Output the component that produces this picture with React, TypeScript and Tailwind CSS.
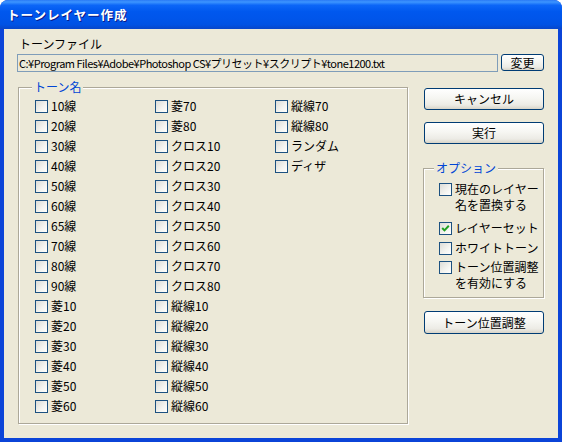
import React from "react";

const FONT = "font-['Noto_Sans_CJK_JP','Noto_Sans',sans-serif]";

function Box({ checked }: { checked?: boolean }) {
  return (
    <span className="w-[13px] h-[13px] shrink-0 border border-[#1C5180] bg-[linear-gradient(135deg,#dcdcd7_0%,#f4f4f0_60%,#ffffff_100%)] flex items-center justify-center">
      {checked && (
        <svg width="9" height="9" viewBox="0 0 9 9">
          <path d="M1.2 4 L3.5 6.4 L7.8 1.8" fill="none" stroke="#21A121" strokeWidth="2" />
        </svg>
      )}
    </span>
  );
}

function Check({ label }: { label: string }) {
  return (
    <div className="h-[20px] flex items-start">
      <span className="mt-[2px]">
        <Box />
      </span>
      <span className="ml-[3px] text-[12px] leading-[16px] text-black whitespace-nowrap">{label}</span>
    </div>
  );
}

function Btn({ label, className }: { label: string; className?: string }) {
  return (
    <div
      className={
        "rounded-[3px] border border-[#003C74] bg-[linear-gradient(to_bottom,#ffffff_0%,#f6f6f2_45%,#ecebe5_80%,#d8d4c8_100%)] flex items-center justify-center text-[12px] leading-[14px] text-black " +
        (className ?? "")
      }
    >
      {label}
    </div>
  );
}

const col1 = ["10線", "20線", "30線", "40線", "50線", "60線", "65線", "70線", "80線", "90線", "菱10", "菱20", "菱30", "菱40", "菱50", "菱60"];
const col2 = ["菱70", "菱80", "クロス10", "クロス20", "クロス30", "クロス40", "クロス50", "クロス60", "クロス70", "クロス80", "縦線10", "縦線20", "縦線30", "縦線40", "縦線50", "縦線60"];
const col3 = ["縦線70", "縦線80", "ランダム", "ディザ"];

export default function App() {
  return (
    <div className={"w-[562px] h-[442px] flex flex-col rounded-t-[8px] overflow-hidden bg-[#0B44D8] " + FONT}>
      <div className="h-[29px] shrink-0 flex items-center pl-[7px] bg-[linear-gradient(to_bottom,#2a7af5_0%,#3d95ff_7%,#0c66f7_18%,#0058ee_40%,#0055ea_65%,#0052e4_85%,#0846c9_100%)]">
        <span className="text-white font-bold text-[12.5px] leading-[16px] tracking-[1px] [text-shadow:1px_1px_#0a1a8a]">
          トーンレイヤー作成
        </span>
      </div>
      <div className="flex-1 mx-[4px] mb-[4px] bg-[#ECE9D8] flex flex-col pl-[13px] pr-[14px]">
        <div className="mt-[8px] ml-[2px] text-[12px] leading-[14px] text-black">トーンファイル</div>
        <div className="mt-[3px] flex items-start">
          <div className="flex-1 h-[18px] border border-[#7F9DB9] flex items-center pl-[1px] text-[11px] leading-[14px] tracking-[-0.5px] text-black whitespace-nowrap overflow-hidden">
            C:¥Program Files¥Adobe¥Photoshop CS¥プリセット¥スクリプト¥tone1200.txt
          </div>
          <Btn label="変更" className="ml-[3px] w-[43px] h-[17px]" />
        </div>
        <div className="mt-[15px] flex items-start">
          <div className="relative ml-[1px] w-[390px] h-[337px] border border-[#ACA899] shadow-[inset_1px_1px_0_#ffffff,1px_1px_0_#ffffff] pt-[10px] pl-[16px] grid grid-cols-[120px_120px_120px]">
            <span className="absolute left-[13px] top-[-8px] px-[2px] bg-[#ECE9D8] text-[#0046D5] text-[12px] leading-[14px]">
              トーン名
            </span>
            <div className="flex flex-col">
              {col1.map((l) => (
                <Check key={l} label={l} />
              ))}
            </div>
            <div className="flex flex-col">
              {col2.map((l) => (
                <Check key={l} label={l} />
              ))}
            </div>
            <div className="flex flex-col">
              {col3.map((l) => (
                <Check key={l} label={l} />
              ))}
            </div>
          </div>
          <div className="ml-[16px] w-[120px] flex flex-col">
            <Btn label="キャンセル" className="mt-[1px] h-[22px]" />
            <Btn label="実行" className="mt-[12px] h-[22px]" />
            <div className="relative mt-[24px] -ml-[1px] w-[121px] h-[130px] border border-[#ACA899] shadow-[inset_1px_1px_0_#ffffff,1px_1px_0_#ffffff] pt-[12px] pl-[15px] flex flex-col">
              <span className="absolute left-[10px] top-[-8px] px-[2px] bg-[#ECE9D8] text-[#0046D5] text-[12px] leading-[14px]">
                オプション
              </span>
              <div className="flex items-start">
                <span className="mt-[2px]">
                  <Box />
                </span>
                <span className="ml-[3px] text-[12px] leading-[16px] text-black">
                  現在のレイヤー
                  <br />
                  名を置換する
                </span>
              </div>
              <div className="mt-[7px] flex items-start">
                <span className="mt-[2px]">
                  <Box checked />
                </span>
                <span className="ml-[3px] text-[12px] leading-[16px] text-black">レイヤーセット</span>
              </div>
              <div className="mt-[4px] flex items-start">
                <span className="mt-[2px]">
                  <Box />
                </span>
                <span className="ml-[3px] text-[12px] leading-[16px] text-black">ホワイトトーン</span>
              </div>
              <div className="mt-[3px] flex items-start">
                <span className="mt-[2px]">
                  <Box />
                </span>
                <span className="ml-[3px] text-[12px] leading-[16px] text-black">
                  トーン位置調整
                  <br />
                  を有効にする
                </span>
              </div>
            </div>
            <Btn label="トーン位置調整" className="mt-[13px] h-[23px]" />
          </div>
        </div>
      </div>
    </div>
  );
}
